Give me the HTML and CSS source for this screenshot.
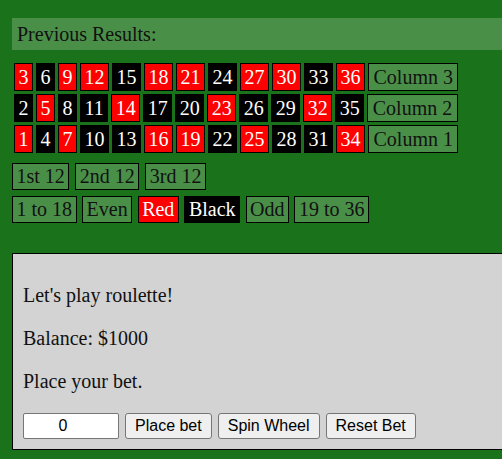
FILE: index.html
```html
<!DOCTYPE html>
<html>
<head>
<meta charset="utf-8">
<link rel="stylesheet" href="styles.css">
</head>
<body>
<div class="page">
  <div class="band">Previous Results:</div>
  <div class="board">
    <div class="row">
      <span class="cell red">3</span><span class="cell black">6</span><span class="cell red">9</span><span class="cell red">12</span><span class="cell black">15</span><span class="cell red">18</span><span class="cell red">21</span><span class="cell black">24</span><span class="cell red">27</span><span class="cell red">30</span><span class="cell black">33</span><span class="cell red">36</span><span class="cell bet col">Column 3</span>
    </div>
    <div class="row">
      <span class="cell black">2</span><span class="cell red">5</span><span class="cell black">8</span><span class="cell black">11</span><span class="cell red">14</span><span class="cell black">17</span><span class="cell black">20</span><span class="cell red">23</span><span class="cell black">26</span><span class="cell black">29</span><span class="cell red">32</span><span class="cell black">35</span><span class="cell bet col">Column 2</span>
    </div>
    <div class="row">
      <span class="cell red">1</span><span class="cell black">4</span><span class="cell red">7</span><span class="cell black">10</span><span class="cell black">13</span><span class="cell red">16</span><span class="cell red">19</span><span class="cell black">22</span><span class="cell red">25</span><span class="cell black">28</span><span class="cell black">31</span><span class="cell red">34</span><span class="cell bet col">Column 1</span>
    </div>
  </div>
  <div class="bets">
    <div class="bet-row dozens">
      <span class="box bet">1st 12</span><span class="box bet">2nd 12</span><span class="box bet">3rd 12</span>
    </div>
    <div class="bet-row">
      <span class="box bet">1 to 18</span><span class="box bet">Even</span><span class="box red">Red</span><span class="box black">Black</span><span class="box bet">Odd</span><span class="box bet">19 to 36</span>
    </div>
  </div>
  <div class="panel">
    <p>Let's play roulette!</p>
    <p>Balance: $1000</p>
    <p>Place your bet.</p>
    <div class="controls">
      <input class="amount" type="text" value="0">
      <button class="btn">Place bet</button>
      <button class="btn">Spin Wheel</button>
      <button class="btn">Reset Bet</button>
    </div>
  </div>
</div>
</body>
</html>
```

FILE: styles.css
```css
html, body {
  overflow: hidden;
}
body {
  margin: 0;
  background: #1a731a;
  font-family: "Liberation Serif", "Times New Roman", serif;
  font-size: 20px;
  color: #111;
}
.page {
  padding: 18px 0 0 12px;
}
.band {
  margin-right: -30px;
  height: 32px;
  line-height: 32px;
  padding-left: 5px;
  background: #4a8f48;
}
.board {
  margin-top: 13px;
  padding-left: 2px;
  display: flex;
  flex-direction: column;
  gap: 3px;
}
.row {
  display: flex;
  gap: 3px;
}
.cell {
  display: block;
  border: 1px solid #000;
  padding: 0 3.5px;
  line-height: 26px;
  white-space: nowrap;
}
.col {
  padding: 0 4.5px;
}
.red {
  background: #ff0000;
  color: #fff;
}
.black {
  background: #000;
  color: #fff;
}
.bet {
  background: #4a8f48;
  color: #111;
}
.bets {
  margin-top: 10px;
  display: flex;
  flex-direction: column;
  gap: 6px;
}
.bet-row {
  display: flex;
  gap: 5.5px;
}
.dozens {
  gap: 6px;
}
.box {
  display: block;
  border: 1px solid #000;
  padding: 0 3.5px;
  line-height: 25px;
  white-space: nowrap;
}
.panel {
  margin-top: 30px;
  margin-right: -30px;
  background: #d3d3d3;
  border: 1px solid #000;
  padding: 10px;
}
.panel p {
  margin: 20px 0;
  line-height: 23px;
}
.controls {
  display: flex;
  gap: 6px;
}
.amount {
  box-sizing: border-box;
  width: 96px;
  height: 26px;
  border: 1px solid #767676;
  border-radius: 2px;
  background: #fff;
  text-align: center;
  font-family: "Liberation Sans", Arial, sans-serif;
  font-size: 16px;
  color: #000;
  padding: 0 18px 0 2px;
}
.btn {
  box-sizing: border-box;
  height: 26px;
  border: 1px solid #767676;
  border-radius: 3px;
  background: #efefef;
  font-family: "Liberation Sans", Arial, sans-serif;
  font-size: 16px;
  color: #000;
  padding: 0 9px;
}
```
